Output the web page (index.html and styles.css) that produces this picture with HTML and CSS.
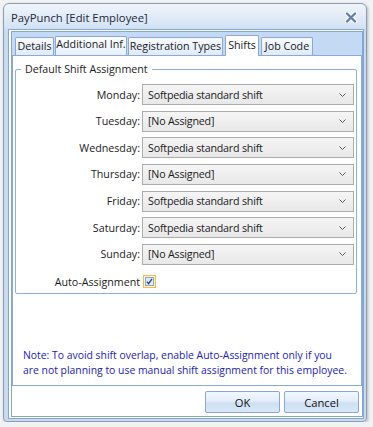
FILE: index.html
```html
<!DOCTYPE html>
<html>
<head>
<meta charset="utf-8">
<link rel="stylesheet" href="styles.css">
</head>
<body>
<div class="window">
  <div class="titlebar">
    <span class="title">PayPunch [Edit Employee]</span>
    <svg class="close" width="12" height="11" viewBox="0 0 12 11">
      <path d="M2 1.5 L10 9.5 M10 1.5 L2 9.5" stroke="#ffffff" stroke-width="4.2" stroke-linecap="round"/>
      <path d="M2 1.5 L10 9.5 M10 1.5 L2 9.5" stroke="#5f7ea8" stroke-width="2.4" stroke-linecap="round"/>
    </svg>
  </div>
  <div class="client">
    <div class="inner">
      <div class="tabs">
        <div class="tab w-details">Details</div>
        <div class="tab tab-hover w-add">Additional Inf.</div>
        <div class="tab w-reg">Registration Types</div>
        <div class="tab tab-active w-shifts">Shifts</div>
        <div class="tab w-job">Job Code</div>
      </div>
      <div class="panel">
        <fieldset class="group">
          <legend>Default Shift Assignment</legend>
          <div class="grid">
            <label>Monday:</label>
            <div class="select"><span>Softpedia standard shift</span><svg width="7" height="4" viewBox="0 0 7 4"><polyline points="0.5,0.5 3.5,3.5 6.5,0.5" fill="none" stroke="#5a5a5a" stroke-width="1"/></svg></div>
            <label>Tuesday:</label>
            <div class="select"><span>[No Assigned]</span><svg width="7" height="4" viewBox="0 0 7 4"><polyline points="0.5,0.5 3.5,3.5 6.5,0.5" fill="none" stroke="#5a5a5a" stroke-width="1"/></svg></div>
            <label>Wednesday:</label>
            <div class="select"><span>Softpedia standard shift</span><svg width="7" height="4" viewBox="0 0 7 4"><polyline points="0.5,0.5 3.5,3.5 6.5,0.5" fill="none" stroke="#5a5a5a" stroke-width="1"/></svg></div>
            <label>Thursday:</label>
            <div class="select"><span>[No Assigned]</span><svg width="7" height="4" viewBox="0 0 7 4"><polyline points="0.5,0.5 3.5,3.5 6.5,0.5" fill="none" stroke="#5a5a5a" stroke-width="1"/></svg></div>
            <label>Friday:</label>
            <div class="select"><span>Softpedia standard shift</span><svg width="7" height="4" viewBox="0 0 7 4"><polyline points="0.5,0.5 3.5,3.5 6.5,0.5" fill="none" stroke="#5a5a5a" stroke-width="1"/></svg></div>
            <label>Saturday:</label>
            <div class="select"><span>Softpedia standard shift</span><svg width="7" height="4" viewBox="0 0 7 4"><polyline points="0.5,0.5 3.5,3.5 6.5,0.5" fill="none" stroke="#5a5a5a" stroke-width="1"/></svg></div>
            <label>Sunday:</label>
            <div class="select"><span>[No Assigned]</span><svg width="7" height="4" viewBox="0 0 7 4"><polyline points="0.5,0.5 3.5,3.5 6.5,0.5" fill="none" stroke="#5a5a5a" stroke-width="1"/></svg></div>
            <label class="auto">Auto-Assignment</label>
            <div class="check-cell auto">
              <svg width="13" height="13" viewBox="0 0 13 13">
                <rect x="0.5" y="0.5" width="12" height="12" fill="#fdf3d6" stroke="#f2be45"/>
                <rect x="2.5" y="2.5" width="8" height="8" fill="#dfe9f7" stroke="#8ea7cc"/>
                <path d="M4 6.8 L5.6 8.6 L9 3.8" fill="none" stroke="#23468a" stroke-width="1.3"/>
              </svg>
            </div>
          </div>
        </fieldset>
        <p class="note">Note: To avoid shift overlap, enable Auto-Assignment only if you<br>are not planning to use manual shift assignment for this employee.</p>
      </div>
      <div class="buttons">
        <button class="btn">OK</button>
        <button class="btn">Cancel</button>
      </div>
    </div>
  </div>
</div>
</body>
</html>
```
FILE: styles.css
```css
body {
  margin: 0;
  background: #f1f2f4;
  font-family: "Open Sans", sans-serif;
  font-size: 10.7px;
  color: #1b1b1b;
}

.window {
  box-sizing: border-box;
  width: 364px;
  height: 419px;
  margin: 3px 0 0 3px;
  border: 1px solid #8d9cb1;
  border-radius: 6px 6px 4px 4px;
  background: linear-gradient(#f0f5fb, #d6e4f5 22px, #c8daf0 28px, #c8daf0);
  display: flex;
  flex-direction: column;
  box-shadow: 1px 1px 3px rgba(0, 0, 0, 0.25);
}

.titlebar {
  box-sizing: border-box;
  height: 25px;
  display: flex;
  align-items: center;
  justify-content: space-between;
  padding: 2px 9px 0 7px;
}

.title {
  font-size: 11.3px;
  color: #1e2838;
}

.close {
  display: block;
}

.client {
  flex: 1;
  min-width: 0;
  min-height: 0;
  display: flex;
  margin: 0 2px 2px 4px;
  border: 1px solid #86a6d2;
  background: #ffffff;
  padding: 1px 0 1px 2px;
}

.inner {
  flex: 1;
  min-width: 0;
  display: flex;
  flex-direction: column;
  border: 1px solid #86a6d2;
  background: #ffffff;
}

.tabs {
  height: 23px;
  flex: none;
  display: flex;
  align-items: flex-end;
  gap: 1px;
  padding-left: 3px;
  background: #c4d9f3;
}

.tab {
  box-sizing: border-box;
  height: 18px;
  border: 1px solid #8aa8d0;
  border-bottom: none;
  border-radius: 2px 2px 0 0;
  background: linear-gradient(#f7fafd, #dfeaf8);
  text-align: center;
  line-height: 16px;
  white-space: nowrap;
  overflow: hidden;
}

.tab-hover {
  height: 19px;
  line-height: 15px;
  background: linear-gradient(#fbfdff, #e8f0fa);
}

.tab-active {
  height: 21px;
  margin-bottom: -1px;
  margin-left: 1px;
  background: #ffffff;
  position: relative;
  z-index: 1;
  line-height: 18px;
}

.w-details { width: 39px; }
.w-add { width: 72px; }
.w-reg { width: 95px; }
.w-shifts { width: 34px; }
.w-job { width: 52px; margin-left: 1px; }

.panel {
  flex: 1;
  min-width: 0;
  display: flex;
  flex-direction: column;
  background: #ffffff;
  border: 1px solid #8aa9d3;
}

.group {
  margin: 6px 4px 0 2px;
  padding: 7px 0 4px 0;
  border: 1px solid #8cb0dc;
  border-radius: 2px;
  min-width: 0;
}

.group legend {
  margin-left: 5px;
  padding: 0 4px;
  line-height: 15px;
}

.grid {
  display: grid;
  grid-template-columns: 124px 212px;
  column-gap: 2px;
  row-gap: 5.67px;
  align-items: center;
}

.grid label {
  text-align: right;
  white-space: nowrap;
}

.select {
  box-sizing: border-box;
  height: 21px;
  border: 1px solid #acacac;
  background: linear-gradient(#f5f5f5, #e8e8e8);
  display: flex;
  align-items: center;
  justify-content: space-between;
  padding: 0 7px 0 5px;
  white-space: nowrap;
  letter-spacing: -0.2px;
}

.select svg {
  display: block;
}

.auto {
  margin-top: 4px;
}

.check-cell {
  height: 13px;
  padding-left: 1px;
}

.check-cell svg {
  display: block;
}

.note {
  margin: auto 0 0 0;
  padding: 0 10px 7px 10px;
  font-size: 10.4px;
  line-height: 15px;
  color: #2222b8;
  white-space: nowrap;
  overflow: hidden;
}

.buttons {
  box-sizing: border-box;
  height: 30px;
  flex: none;
  display: flex;
  justify-content: flex-end;
  gap: 4px;
  padding: 5px 3px 0 0;
  background: #ffffff;
}

.btn {
  box-sizing: border-box;
  width: 75px;
  height: 22px;
  border: 1px solid #8ba7cd;
  border-radius: 2px;
  background: linear-gradient(#f3f8fe, #e3edf9 45%, #cfe0f4 55%, #d8e6f7);
  font-family: "Open Sans", sans-serif;
  font-size: 11.2px;
  color: #111111;
  padding: 0;
}
```
